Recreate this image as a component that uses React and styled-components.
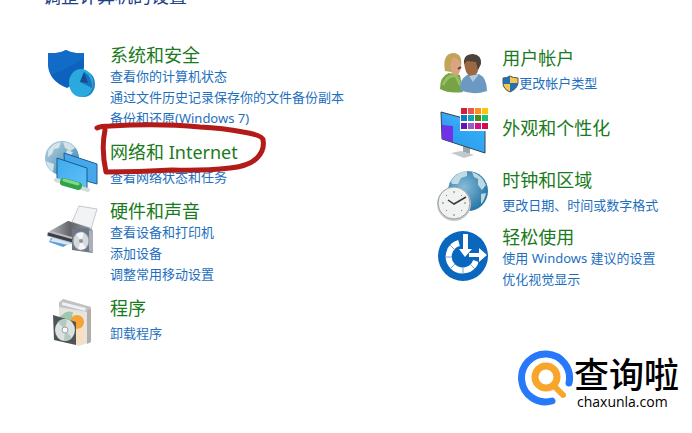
import React from 'react';
import styled, { createGlobalStyle } from 'styled-components';

const swatches = [
  '#d01f36', '#f0544f', '#f7931e', '#ffc20e',
  '#0a7bc4', '#12a0b8', '#4b8b12', '#14c470',
  '#6414b8', '#a05cc0', '#d80f8c', '#d0104c'
];

function ShieldIcon() {
  return (
    <Icon viewBox="0 0 56 44" aria-hidden="true">
      <path
        d="M22 6Q30 10 40 9V23Q39 37 23 44Q5 37 4 21V9Q14 10 22 6Z"
        fill="#0c62bd"
      />
      <path d="M4 21V9Q14 10 22 6Q30 10 40 9V14Q20 27 7 31Z" fill="#126bc6" />
      <ellipse cx="40" cy="40" rx="11" ry="13" fill="#2388bf" />
      <ellipse cx="37" cy="39" rx="12" ry="14" fill="#2aa9df" />
      <path d="M36 38L40 28Q48 32 48 44Z" fill="#1b72bb" />
      <path d="M36 38L40 28L44 39Z" fill="#124c92" />
    </Icon>
  );
}

function NetworkIcon() {
  return (
    <Icon viewBox="0 0 56 44" aria-hidden="true">
      <defs>
        <linearGradient id="netGlobe" x1="0" y1="0" x2="1" y2="1">
          <stop offset="0" stopColor="#bcd6e4" />
          <stop offset="1" stopColor="#3480ad" />
        </linearGradient>
        <linearGradient id="netScreen" x1="0" y1="0" x2="1" y2="1">
          <stop offset="0" stopColor="#3fa9ee" />
          <stop offset="1" stopColor="#5fc2f8" />
        </linearGradient>
      </defs>
      <circle cx="18" cy="17" r="17" fill="url(#netGlobe)" />
      <path
        d="M4 10Q9 2 17 1L15 7L10 8L8 13L4 16ZM19 1Q27 1 31 7L26 10L21 7ZM4 21L10 23L9 31Q3 27 2 20ZM23 9L29 11L27 14L22 12Z"
        fill="#e1ebed"
        opacity="0.85"
      />
      <path d="M20 12L53 23V43L21 34Z" fill="#44a8ea" stroke="#1b5f96" />
      <path d="M13 17L43 27V47L13 38Z" fill="url(#netScreen)" stroke="#175c91" />
      <path d="M12 39L44 49" stroke="#d3dcda" strokeWidth="4" strokeLinecap="round" />
      <path d="M20 41L34 45" stroke="#2fa24a" strokeWidth="8" strokeLinecap="round" />
      <path d="M20 39L34 43" stroke="#7fd886" strokeWidth="3" strokeLinecap="round" />
    </Icon>
  );
}

function PrinterIcon() {
  return (
    <Icon viewBox="0 0 56 44" aria-hidden="true">
      <defs>
        <linearGradient id="printerTop" x1="0" y1="0" x2="1" y2="0">
          <stop offset="0" stopColor="#b4b6b9" />
          <stop offset="0.5" stopColor="#626468" />
          <stop offset="1" stopColor="#94979b" />
        </linearGradient>
      </defs>
      <path d="M35 6L53 9L47 29L28 22Z" fill="#f2f3f5" stroke="#c5c8cc" />
      <path d="M3 33L24 21L48 28L49 35L28 44L3 36Z" fill="#b9bcc0" />
      <path d="M6 31L24 21L46 28L28 37Z" fill="url(#printerTop)" />
      <path d="M4 34L29 41" stroke="#3b3f45" strokeWidth="3" />
      <path d="M7 38L27 43L19 47L5 42Z" fill="#5e9ed8" />
      <path d="M9 38L27 43L24 45L6 41Z" fill="#d2e8f8" />
      <path d="M28 29L44 28L49 31V53L28 50Z" fill="#6d7786" />
      <path d="M45 30L49 31V53L45 51Z" fill="#a9b0b9" />
      <ellipse cx="37" cy="41" rx="8" ry="9" fill="#d6dade" stroke="#949ba5" />
      <path d="M37 41L32 34Q37 31 40 33ZM37 41L42 48Q37 51 34 49Z" fill="#f5f6f7" />
      <circle cx="37" cy="41" r="2" fill="#8b939e" />
    </Icon>
  );
}

function ProgramsIcon() {
  return (
    <Icon viewBox="0 0 56 44" aria-hidden="true">
      <path d="M15 5L19 2L47 10V45L35 49L15 42Z" fill="#e7e4df" />
      <path d="M15 6L19 2L47 10L44 15L15 10Z" fill="#bfc1c3" />
      <path d="M18 5L42 11L41 14L18 8Z" fill="#eff0f1" />
      <path d="M43 14L47 11V45L43 47Z" fill="#b2ada8" />
      <path d="M16 20Q22 13 29 15L27 26L16 22Z" fill="#9cc9ae" />
      <circle cx="33" cy="25" r="7" fill="#f4a434" />
      <path d="M32 32L40 31L39 46L32 48Z" fill="#f9dfbc" />
      <path d="M9 18L32 25V48L10 43Z" fill="#4e5458" />
      <ellipse cx="21" cy="33" rx="10" ry="11" fill="#dce1e2" />
      <path d="M21 33L14 25Q19 21 23 23ZM21 33L28 41Q24 44 20 44Z" fill="#b5c9c2" />
      <circle cx="21" cy="33" r="3" fill="#fafafa" stroke="#9aa2a6" />
    </Icon>
  );
}

function UsersIcon() {
  return (
    <Icon viewBox="0 0 56 44" aria-hidden="true">
      <path d="M4 42Q4 29 13 26L24 28L27 45Q13 47 4 42Z" fill="#76a445" />
      <path d="M9 24Q6 7 17 6Q27 6 25 20L21 26Z" fill="#c0a458" />
      <path d="M17 10Q23 11 25 18Q25 25 21 29L16 27L14 18Z" fill="#d8a580" />
      <path d="M7 38Q12 27 20 29L25 39" fill="none" stroke="#98bd63" strokeWidth="3" />
      <path d="M24 43Q23 33 31 28L43 27Q51 31 51 44Q37 49 24 43Z" fill="#6c99c1" />
      <path d="M28 13Q28 27 36 31Q44 27 43 13Z" fill="#9b6844" />
      <path d="M28 17Q27 7 37 7Q46 8 45 17L42 23L40 15L31 14Z" fill="#4c4239" />
      <path d="M33 29L37 35L43 27" fill="#afcbe3" />
      <path d="M22 22L25 20" stroke="#763327" strokeWidth="2" />
    </Icon>
  );
}

function DisplayIcon() {
  return (
    <Icon viewBox="0 0 56 44" aria-hidden="true">
      <defs>
        <linearGradient id="displayScreen" x1="0" y1="1" x2="1" y2="0">
          <stop offset="0" stopColor="#2585eb" />
          <stop offset="1" stopColor="#4ac6ff" />
        </linearGradient>
      </defs>
      <path d="M27 41L34 43V50L27 48Z" fill="#9da6ac" />
      <path d="M15 49L25 47L38 51L28 54Z" fill="#c2c8cb" />
      <path d="M5 8L49 20V49L6 35Z" fill="url(#displayScreen)" stroke="#35434d" />
      <path d="M6 21L17 22V38L6 35Z" fill="#7032e6" />
      <path d="M17 22L31 15L48 29V48L17 38Z" fill="#2aa4ef" opacity="0.5" />
      <rect x="24" y="3" width="31" height="24" fill="#fff" />
      {swatches.map((color, i) => (
        <rect
          key={color}
          x={25 + (i % 4) * 7}
          y={4 + Math.floor(i / 4) * 7 + Math.floor(i / 8)}
          width="6"
          height="6"
          fill={color}
        />
      ))}
    </Icon>
  );
}

function ClockIcon() {
  return (
    <Icon viewBox="0 0 56 44" aria-hidden="true">
      <defs>
        <radialGradient id="clockGlobe" cx="0.4" cy="0.4" r="0.6">
          <stop offset="0" stopColor="#85bcd9" />
          <stop offset="1" stopColor="#2a78a8" />
        </radialGradient>
      </defs>
      <circle cx="32" cy="22" r="20" fill="url(#clockGlobe)" />
      <path
        d="M15 12Q22 2 31 2L31 7L25 9L22 15L16 15ZM36 3Q46 6 50 16L46 21L42 16L42 10L38 8ZM45 25L50 24Q49 31 45 35Z"
        fill="#d4e6e9"
        opacity="0.85"
      />
      <circle cx="18" cy="35" r="17" fill="#c6c9cb" />
      <circle cx="18" cy="34" r="16" fill="#f0f1f1" stroke="#9ba0a4" />
      <path d="M18 22v2M18 45v2M6 34h2M28 34h2M10 26l1 1M26 26l-1 1M10 42l1-1M26 42l-1-1" stroke="#777d82" />
      <path d="M12 31L18 35L30 28" fill="none" stroke="#35393d" strokeWidth="1.5" />
    </Icon>
  );
}

function EaseIcon() {
  return (
    <Icon viewBox="0 0 56 44" aria-hidden="true">
      <circle cx="27" cy="30" r="25" fill="#0967bd" />
      <path
        d="M23 17A14 14 0 1 0 40 35"
        fill="none"
        stroke="#fff"
        strokeWidth="6"
      />
      <path
        d="M9 31h7M14 43l5-5M27 41v7M39 43l-5-5M14 19l5 5"
        stroke="#6ea6da"
      />
      <path
        d="M27 8H32V23H36L29 31L23 23H27ZM33 27H43V22L51 29L43 36V31H33Z"
        fill="#fff"
        stroke="#0967bd"
        strokeWidth="1.5"
        paintOrder="stroke"
      />
    </Icon>
  );
}

function UacShield() {
  return (
    <SmallIcon viewBox="0 0 17 18" aria-hidden="true">
      <path d="M8 1Q11 3 16 3V8Q15 14 8 17Q1 14 1 8V3Q5 3 8 1Z" fill="#2471b8" />
      <path d="M8 1Q11 3 16 3V8H8ZM8 9V17Q2 14 1 9Z" fill="#f7c747" />
      <path
        d="M8 1Q11 3 16 3V8Q15 14 8 17Q1 14 1 8V3Q5 3 8 1Z"
        fill="none"
        stroke="#42596b"
      />
    </SmallIcon>
  );
}

function Scribble() {
  return (
    <ScribbleSvg viewBox="0 0 172 54" aria-hidden="true">
      <path
        d="M3 7Q7 5 16 5Q65 2 106 6Q129 7 149 11Q169 14 169 19Q171 29 163 37Q155 45 136 47Q110 50 78 49Q45 51 12 51Q7 28 11 9"
        fill="none"
        stroke="#b31b18"
        strokeWidth="5"
        strokeLinecap="round"
        strokeLinejoin="round"
      />
    </ScribbleSvg>
  );
}

const leftCategories = [
  {
    title: '系统和安全',
    icon: ShieldIcon,
    links: [
      '查看你的计算机状态',
      '通过文件历史记录保存你的文件备份副本',
      '备份和还原(Windows 7)'
    ]
  },
  {
    title: '网络和 Internet',
    icon: NetworkIcon,
    links: ['查看网络状态和任务'],
    marked: true
  },
  {
    title: '硬件和声音',
    icon: PrinterIcon,
    links: ['查看设备和打印机', '添加设备', '调整常用移动设置']
  },
  { title: '程序', icon: ProgramsIcon, links: ['卸载程序'] }
];

const rightCategories = [
  {
    title: '用户帐户',
    icon: UsersIcon,
    links: ['更改帐户类型'],
    shield: true
  },
  { title: '外观和个性化', icon: DisplayIcon, links: [] },
  {
    title: '时钟和区域',
    icon: ClockIcon,
    links: ['更改日期、时间或数字格式']
  },
  {
    title: '轻松使用',
    icon: EaseIcon,
    links: ['使用 Windows 建议的设置', '优化视觉显示']
  }
];

function Category({ title, icon: CategoryIcon, links, marked, shield }) {
  return (
    <Row>
      <CategoryIcon />
      <Details $count={links.length}>
        <Heading>
          <HeadingLink href="#">{title}</HeadingLink>
          {marked && <Scribble />}
        </Heading>
        {links.length > 0 && (
          <LinkList>
            {links.map(link => (
              <li key={link}>
                <TaskLink href="#">
                  {shield && <UacShield />}
                  {link}
                </TaskLink>
              </li>
            ))}
          </LinkList>
        )}
      </Details>
    </Row>
  );
}

function App() {
  return (
    <Page>
      <GlobalStyle />
      <TitleBar>
        <h1>调整计算机的设置</h1>
      </TitleBar>
      <Columns>
        <Column>
          {leftCategories.map(item => (
            <Category key={item.title} {...item} />
          ))}
        </Column>
        <Column $right>
          {rightCategories.map(item => (
            <Category key={item.title} {...item} />
          ))}
        </Column>
      </Columns>
      <Brand>
        <BrandMark viewBox="0 0 56 56" aria-hidden="true">
          <path
            d="M51 33A24 24 0 1 0 34 51"
            fill="none"
            stroke="#2878fa"
            strokeWidth="7"
            strokeLinecap="round"
          />
          <circle cx="28" cy="27" r="11" fill="none" stroke="#f8a52b" strokeWidth="7" />
          <path d="M37 37L45 45" stroke="#f8a52b" strokeWidth="6" strokeLinecap="round" />
        </BrandMark>
        <BrandText>
          <BrandName>查询啦</BrandName>
          <BrandDomain>chaxunla.com</BrandDomain>
        </BrandText>
      </Brand>
    </Page>
  );
}

const GlobalStyle = createGlobalStyle`
  * {
    box-sizing: border-box;
  }

  body {
    margin: 0;
    background: #fff;
    font-family: 'Noto Sans', 'Noto Sans CJK SC', sans-serif;
  }

  h1, h2, ul {
    margin: 0;
    padding: 0;
    font-weight: 400;
  }

  ul {
    list-style: none;
  }

  a {
    text-decoration: none;
  }
`;

const Page = styled.main`
  overflow: hidden;
`;

const TitleBar = styled.header`
  display: flex;
  align-items: flex-end;
  height: 8px;
  padding-left: 43px;
  overflow: hidden;

  h1 {
    color: #1d4287;
    font-size: 18px;
    line-height: 24px;
  }
`;

const Columns = styled.div`
  display: grid;
  grid-template-columns: 11fr 7fr;
  padding: 36px 6px 0 44px;
`;

const Column = styled.div`
  display: flex;
  flex-direction: column;
  gap: ${props => (props.$right ? 10 : 12)}px;
  padding-top: ${props => (props.$right ? 3 : 0)}px;
`;

const Row = styled.section`
  display: flex;
  gap: 10px;
`;

const Icon = styled.svg`
  flex: 0 0 56px;
  height: 44px;
  overflow: visible;
`;

const SmallIcon = styled.svg`
  width: 17px;
  height: 18px;
`;

const Details = styled.div`
  display: flex;
  flex-direction: column;
  gap: ${props => (props.$count === 1 ? 4 : 0)}px;
  padding: ${props => (props.$count === 0 ? '13px 0 20px' : '0')};
`;

const Heading = styled.h2`
  position: relative;
  font-size: 18px;
  line-height: 22px;
  white-space: nowrap;
`;

const HeadingLink = styled.a`
  color: #197a20;
`;

const ScribbleSvg = styled.svg`
  position: absolute;
  top: -20px;
  left: -16px;
  width: 172px;
  height: 54px;
  pointer-events: none;
`;

const LinkList = styled.ul`
  font-size: 13px;
  line-height: 21px;
  white-space: nowrap;
`;

const TaskLink = styled.a`
  display: flex;
  align-items: center;
  height: 21px;
  color: #1e6fc0;
`;

const Brand = styled.footer`
  display: flex;
  justify-content: flex-end;
  margin-top: 6px;
  padding-right: 13px;
`;

const BrandMark = styled.svg`
  width: 56px;
  height: 56px;
`;

const BrandText = styled.div`
  display: flex;
  flex-direction: column;
  padding-top: 2px;
  color: #000;
`;

const BrandName = styled.span`
  font-family: 'Noto Sans CJK SC', sans-serif;
  font-size: 35px;
  font-weight: 500;
  line-height: 42px;
`;

const BrandDomain = styled.span`
  padding-left: 3px;
  font-family: 'Open Sans', sans-serif;
  font-size: 14px;
  font-weight: 500;
  line-height: 16px;
`;

export default App;
